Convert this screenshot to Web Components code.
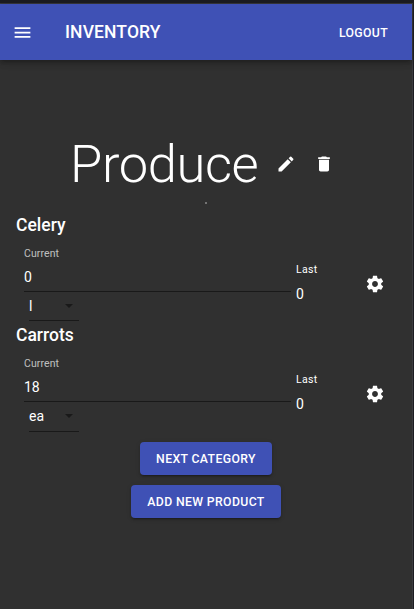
<!DOCTYPE html>
<html lang="en">
<head>
<meta charset="utf-8">
<title>Inventory</title>
<style>
html,body{margin:0;height:100%;background:#303030;overflow:hidden}
body{font-family:Roboto,"Liberation Sans",sans-serif;color:#fff}
</style>
</head>
<body>
<inventory-app></inventory-app>
<script>
const define = (name, html, setup) => customElements.define(name, class extends HTMLElement {
  connectedCallback() {
    if (this.shadowRoot) return;
    const t = document.createElement('template');
    t.innerHTML = html;
    this.attachShadow({mode: 'open'}).append(t.content.cloneNode(true));
    if (setup) setup(this, this.shadowRoot);
  }
});

const icons = {
  menu: 'M3 18h18v-2H3v2zm0-5h18v-2H3v2zm0-7v2h18V6H3z',
  edit: 'M3 17.25V21h3.75L17.81 9.94l-3.75-3.75L3 17.25zM20.71 7.04c.39-.39.39-1.02 0-1.41l-2.34-2.34a.9959.9959 0 0 0-1.41 0l-1.83 1.83 3.75 3.75 1.83-1.83z',
  remove: 'M6 19c0 1.1.9 2 2 2h8c1.1 0 2-.9 2-2V7H6v12zM19 4h-3.5l-1-1h-5l-1 1H5v2h14V4z',
  settings: 'M19.43 12.98c.04-.32.07-.64.07-.98s-.03-.66-.07-.98l2.11-1.65c.19-.15.24-.42.12-.64l-2-3.46c-.12-.22-.39-.3-.61-.22l-2.49 1c-.52-.4-1.08-.73-1.69-.98l-.38-2.65C14.46 2.18 14.25 2 14 2h-4c-.25 0-.46.18-.49.42l-.38 2.65c-.61.25-1.17.59-1.69.98l-2.49-1c-.23-.09-.49 0-.61.22l-2 3.46c-.13.22-.07.49.12.64l2.11 1.65c-.04.32-.07.65-.07.98s.03.66.07.98l-2.11 1.65c-.19.15-.24.42-.12.64l2 3.46c.12.22.39.3.61.22l2.49-1c.52.4 1.08.73 1.69.98l.38 2.65c.03.24.24.42.49.42h4c.25 0 .46-.18.49-.42l.38-2.65c.61-.25 1.17-.59 1.69-.98l2.49 1c.23.09.49 0 .61-.22l2-3.46c.12-.22.07-.49-.12-.64l-2.11-1.65zM12 15.5c-1.93 0-3.5-1.57-3.5-3.5s1.57-3.5 3.5-3.5 3.5 1.57 3.5 3.5-1.57 3.5-3.5 3.5z'
};

define('md-icon', `<style>:host{display:block;flex:none;width:20px;height:20px}svg{display:block;width:100%;height:100%;fill:#fff}</style><svg viewBox="0 0 24 24"><path/></svg>`,
  (el, root) => root.querySelector('path').setAttribute('d', icons[el.getAttribute('name')]));

define('app-bar', `<style>
:host{display:flex;align-items:center;height:56px;box-sizing:border-box;padding:0 24px 0 12px;background:#3f51b5;flex:none;box-shadow:0 2px 4px -1px rgba(0,0,0,.2),0 4px 5px rgba(0,0,0,.14),0 1px 10px rgba(0,0,0,.12)}
.title{font-size:17.5px;font-weight:500;letter-spacing:.13px;margin-left:32px;flex:1;line-height:24px}
.action{font-size:12.25px;font-weight:500;letter-spacing:.35px;line-height:24px;padding-top:1px}
md-icon{width:21px;height:21px;margin-top:1px}
</style><md-icon name="menu"></md-icon><span class="title"><slot></slot></span><span class="action"><slot name="action"></slot></span>`);

define('category-title', `<style>
:host{display:flex;align-items:center;height:62px;padding:73px 0 0 70px}
h1{margin:0;font-weight:300;font-size:52.5px;line-height:62px;letter-spacing:-.4px;width:190px;margin-right:16px;white-space:nowrap}
md-icon{margin-right:17.5px}
</style><h1><slot></slot></h1><md-icon name="edit"></md-icon><md-icon name="remove"></md-icon>`);

define('tiny-rule', `<style>:host{display:block;width:2px;height:2px;margin:7px 0 8px 205px;background:#737373}</style>`);

define('product-row', `<style>
:host{display:block;height:110px;padding:0 16px}
h2{margin:0;font-size:17.5px;font-weight:500;line-height:24px;padding-top:1px}
.row{display:grid;grid-template-columns:267px 73px auto;padding-left:8px}
.label{font-size:10.5px;line-height:14px;color:rgba(255,255,255,.7);letter-spacing:.1px;padding-top:10px}
.value{font-size:14px;line-height:18px;padding-top:7px}
.field{border-bottom:1px solid #191919;height:54px}
.unit{display:flex;align-items:center;justify-content:space-between;width:50px;height:28px;margin-left:5px;font-size:14px;border-bottom:1px solid #191919;box-sizing:content-box}
.unit i{width:0;border:4px solid transparent;border-top-color:#191919;border-bottom:0;margin-right:6px}
.last{padding:16px 0 0 5px}
.last .label{color:#fff;letter-spacing:.3px}
.last .value{padding-top:8px}
md-icon{margin:37px 0 0 .5px}
</style>
<h2><slot></slot></h2>
<div class="row"><div><div class="field"><div class="label">Current</div><div class="value" id="v"></div></div><div class="unit"><span id="u"></span><i></i></div></div>
<div class="last"><div class="label">Last</div><div class="value">0</div></div><md-icon name="settings"></md-icon></div>`,
  (el, root) => {
    root.getElementById('v').textContent = el.getAttribute('value');
    root.getElementById('u').textContent = el.getAttribute('unit');
    if (el.hasAttribute('last')) root.querySelector('.unit').style.cssText = 'height:28px;padding-bottom:1px';
  });

define('md-button', `<style>
:host{display:flex;align-items:center;justify-content:center;align-self:center;height:33px;box-sizing:border-box;background:#3f51b5;border-radius:4px;font-size:12.25px;font-weight:500;letter-spacing:.37px;white-space:nowrap;box-shadow:0 3px 1px -2px rgba(0,0,0,.2),0 2px 2px rgba(0,0,0,.14),0 1px 5px rgba(0,0,0,.12)}
</style><slot></slot>`);

define('inventory-app', `<style>
:host{display:flex;flex-direction:column;width:414px;height:609px;box-sizing:border-box;background:#303030;border-top:3px solid #1b1b1f;border-right:1px solid #1c1c20;overflow:hidden}
.window{flex:1;display:flex;flex-direction:column;border-top:1px solid #38383c;border-right:1px solid #3a3a3e}
.actions{display:flex;flex-direction:column;gap:10px;padding-top:10px}
.next{width:132px}.add{width:150px}
</style>
<div class="window"><app-bar>INVENTORY<span slot="action">LOGOUT</span></app-bar>
<category-title>Produce</category-title><tiny-rule></tiny-rule>
<product-row value="0" unit="l">Celery</product-row>
<product-row value="18" unit="ea" last>Carrots</product-row>
<div class="actions"><md-button class="next">NEXT CATEGORY</md-button><md-button class="add">ADD NEW PRODUCT</md-button></div></div>`);
</script>
</body>
</html>
